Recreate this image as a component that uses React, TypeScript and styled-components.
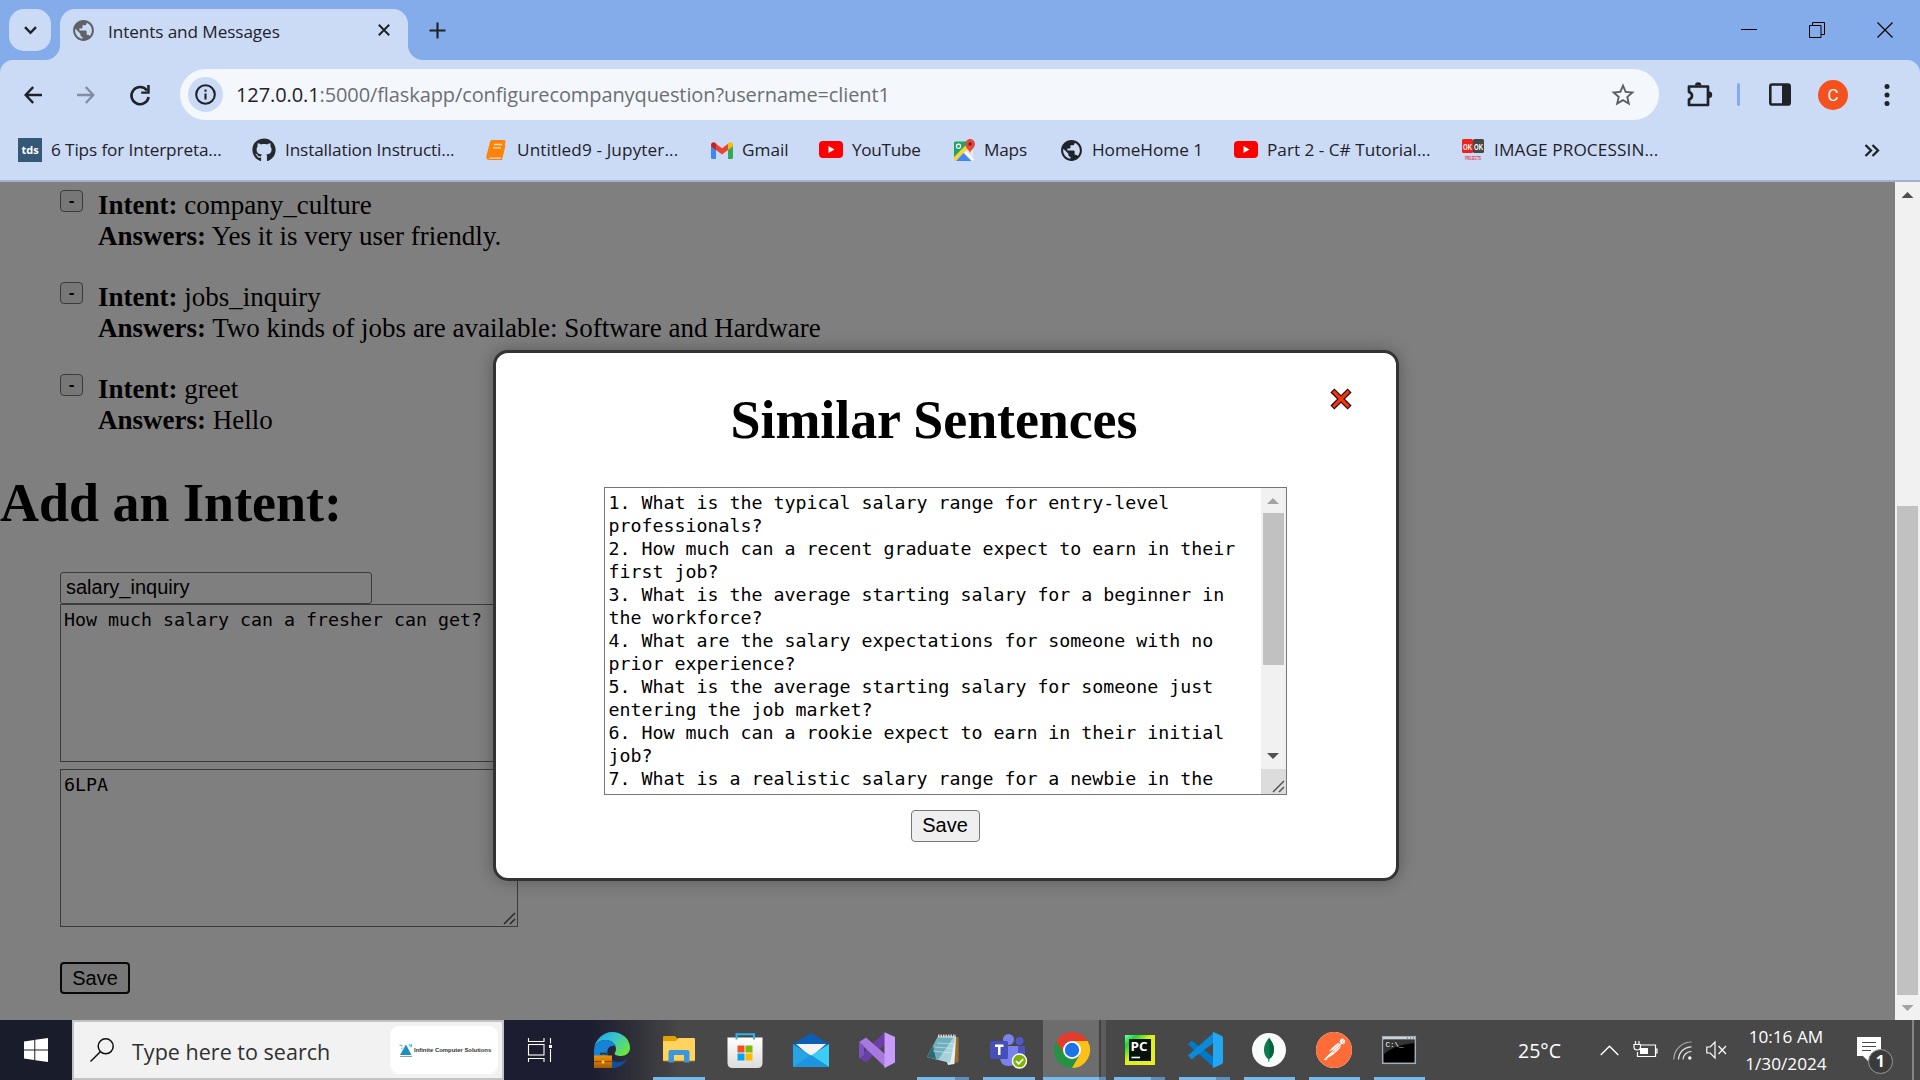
import React from 'react';
import styled, { createGlobalStyle } from 'styled-components';
import { MdPublic, MdStarOutline } from 'react-icons/md';
import { FaGithub } from 'react-icons/fa';
import { SiPostman } from 'react-icons/si';

const ui = '"Open Sans", "Noto Sans", sans-serif';
const serif = '"Liberation Serif", "Times New Roman", serif';
const arial = '"Liberation Sans", Arial, sans-serif';
const mono = '"DejaVu Sans Mono", Consolas, monospace';

const GlobalStyle = createGlobalStyle`
  *, *::before, *::after { box-sizing: border-box; }
  body { margin: 0; background: #808080; overflow: hidden; }
  svg { display: block; flex: none; overflow: visible; }
  button { margin: 0; padding: 0; }
`;

const Screen = styled.div`
  width: 1920px;
  height: 1080px;
  display: flex;
  flex-direction: column;
  overflow: hidden;
`;

/* ---------- browser chrome ---------- */

const TitleBar = styled.header`
  height: 60px;
  flex: none;
  display: flex;
  padding: 9px 0 0 9px;
  background: #84abea;
`;

const TabSearch = styled.button`
  width: 42px;
  height: 42px;
  display: flex;
  align-items: center;
  justify-content: center;
  border: 0;
  border-radius: 15px;
  background: #cbdbf6;
`;

const Tab = styled.div`
  position: relative;
  width: 348px;
  height: 51px;
  margin-left: 9px;
  padding: 0 18px 9px 11px;
  display: flex;
  align-items: center;
  border-radius: 15px 15px 0 0;
  background: #cbdbf6;
  &::before, &::after {
    content: '';
    position: absolute;
    bottom: 0;
    width: 15px;
    height: 15px;
  }
  &::before {
    left: -15px;
    background: radial-gradient(circle at 0 0, transparent 14.5px, #cbdbf6 15.5px);
  }
  &::after {
    right: -15px;
    background: radial-gradient(circle at 100% 0, transparent 14.5px, #cbdbf6 15.5px);
  }
`;

const Label = styled.span<{ $size?: number; $track?: number; $color?: string }>`
  font: ${p => p.$size ?? 17.2}px ${ui};
  letter-spacing: ${p => p.$track ?? 0}px;
  color: ${p => p.$color ?? '#1f2228'};
  white-space: pre;
`;

const TabTitle = styled(Label)`
  flex: 1;
  margin: 3px 0 0 12px;
`;

const NewTab = styled.div`
  margin: 13px 0 0 21px;
`;

const WindowControls = styled.div`
  margin-left: auto;
  padding: 13px 27px 0 0;
  display: flex;
  gap: 52px;
`;

const ToolbarWrap = styled.div`
  flex: none;
  background: #84abea;
`;

const Toolbar = styled.div`
  height: 69px;
  display: flex;
  align-items: center;
  padding-left: 24px;
  background: #cbdbf6;
  border-radius: 13px 13px 0 0;
`;

const NavGroup = styled.div`
  width: 156px;
  display: flex;
  align-items: center;
  gap: 35px;
  svg:nth-child(2) { opacity: 0.42; }
`;

const AddressBar = styled.div`
  width: 1479px;
  height: 51px;
  padding: 0 22px 0 8px;
  display: flex;
  align-items: center;
  border-radius: 26px;
  background: #f4f8fd;
  color: #5b5e63;
`;

const SiteInfo = styled.div`
  width: 35px;
  height: 35px;
  margin-right: 13px;
  display: flex;
  align-items: center;
  justify-content: center;
  border-radius: 50%;
  background: #cbdbf6;
`;

const Url = styled(Label)`
  flex: 1;
`;

const Actions = styled.div`
  flex: 1;
  display: flex;
  align-items: center;
  padding-left: 27px;
`;

const Separator = styled.i`
  width: 3px;
  height: 23px;
  margin: 0 29px 0 24px;
  border-radius: 2px;
  background: #84abea;
`;

const Avatar = styled.div`
  width: 30px;
  height: 30px;
  margin: 0 36px 0 27px;
  border-radius: 50%;
  background: #f4511e;
  color: #fff;
  font: 17px/30px Roboto, ${arial};
  text-align: center;
`;

const Bookmarks = styled.nav`
  height: 51px;
  flex: none;
  display: flex;
  align-items: center;
  padding: 0 40px 9px 18px;
  background: #cbdbf6;
`;

const Bookmark = styled.a<{ $w: number; $gap?: number }>`
  width: ${p => p.$w}px;
  flex: none;
  display: flex;
  align-items: center;
  gap: ${p => p.$gap ?? 9}px;
`;

const BookmarkLabel = styled(Label)`
  margin-top: -2px;
`;

const TdsIcon = styled.span`
  width: 24px;
  height: 24px;
  flex: none;
  background: #355876;
  color: #fff;
  font: bold 11px/23px ${ui};
  text-align: center;
`;

const OverflowButton = styled.div`
  margin-left: auto;
`;

const ChromeEdge = styled.div`
  height: 2px;
  flex: none;
  background: #a4b2cb;
`;

/* ---------- page ---------- */

const Viewport = styled.main`
  height: 838px;
  flex: none;
  display: flex;
`;

const Page = styled.section`
  position: relative;
  width: 1895px;
  height: 838px;
  overflow: hidden;
  background: #fff;
  font: 27px/31px ${serif};
  color: #000;
`;

const IntentList = styled.div`
  display: flex;
  flex-direction: column;
  gap: 30px;
  padding: 8px 0 0 60px;
`;

const IntentRow = styled.div`
  display: flex;
  align-items: flex-start;
  gap: 15px;
`;

const RemoveButton = styled.button`
  width: 23px;
  height: 22px;
  border: 1px solid #767676;
  border-radius: 4px;
  background: #efefef;
  color: #000;
  font: bold 17px/18px ${arial};
`;

const Heading = styled.h1`
  margin: 36px 0 0;
  font: bold 54px/62px ${serif};
`;

const Form = styled.form`
  display: flex;
  flex-direction: column;
  align-items: flex-start;
  padding: 38px 0 0 60px;
`;

const TextInput = styled.div`
  width: 312px;
  height: 32px;
  padding: 0 5px;
  border: 1px solid #767676;
  border-radius: 3px;
  font: 20px/29px ${arial};
`;

const TextArea = styled.div<{ $w: number; $h: number }>`
  position: relative;
  width: ${p => p.$w}px;
  height: ${p => p.$h}px;
  padding: 3px;
  border: 1px solid #767676;
  overflow: hidden;
  background: #fff;
  color: #000;
  font: 18.27px/23px ${mono};
  white-space: pre;
`;

const AnswerArea = styled(TextArea)`
  margin-top: 7px;
`;

const SentenceArea = styled(TextArea)`
  margin-right: 2px;
  padding-left: 4px;
`;

const Grip = styled.span`
  position: absolute;
  right: 1px;
  bottom: 1px;
`;

const Button = styled.button<{ $focused?: boolean }>`
  width: ${p => (p.$focused ? 70 : 69)}px;
  height: 32px;
  border: ${p => (p.$focused ? '2px solid #101010' : '1px solid #767676')};
  border-radius: 4px;
  background: #efefef;
  color: #000;
  font: 20px/26px ${arial};
`;

const FormButton = styled(Button)`
  margin-top: 35px;
`;

const Overlay = styled.div`
  position: absolute;
  inset: 0;
  background: rgba(0, 0, 0, 0.5);
`;

const Modal = styled.div`
  position: absolute;
  left: 493px;
  top: 168px;
  width: 906px;
  height: 531px;
  display: flex;
  flex-direction: column;
  align-items: center;
  border: 3px solid #333;
  border-radius: 15px;
  background: #fff;
  box-shadow: 0 0 17px rgba(0, 0, 0, 0.3);
`;

const ModalTitle = styled.h1`
  margin: 36px 24px 36px 0;
  font: bold 54px/62px ${serif};
  letter-spacing: -0.1px;
`;

const CloseIcon = styled.span`
  position: absolute;
  right: 44px;
  top: 35px;
`;

const AreaScroll = styled.div`
  position: absolute;
  top: 0;
  right: 0;
  width: 25px;
  height: 100%;
  padding-top: 10px;
  display: flex;
  flex-direction: column;
  align-items: center;
  background: #f1f1f1;
`;

const Arrow = styled.i<{ $up?: boolean; $faint?: boolean }>`
  width: 12px;
  height: 6px;
  flex: none;
  background: ${p => (p.$faint ? '#a3a3a3' : '#505050')};
  clip-path: ${p => (p.$up ? 'polygon(50% 0, 100% 100%, 0 100%)' : 'polygon(0 0, 100% 0, 50% 100%)')};
`;

const Thumb = styled.i<{ $h: number; $top: number; $bottom: number }>`
  width: 21px;
  height: ${p => p.$h}px;
  margin: ${p => p.$top}px 0 ${p => p.$bottom}px;
  flex: none;
  background: #c1c1c1;
`;

const GripCorner = styled.div`
  width: 25px;
  height: 25px;
  margin-top: auto;
  background: #dcdcdc;
`;

const ModalButton = styled(Button)`
  margin: 15px 2px 0 0;
  padding-bottom: 2px;
`;

const Scrollbar = styled.aside`
  width: 25px;
  display: flex;
  flex-direction: column;
  align-items: center;
  padding-top: 10px;
  background: #f1f1f1;
`;

/* ---------- taskbar ---------- */

const Taskbar = styled.footer`
  height: 60px;
  flex: none;
  display: flex;
  background: linear-gradient(90deg, #191c2b 0, #1c1d30 590px, #30303a 635px, #484848 680px);
`;

const Start = styled.div`
  width: 72px;
  display: flex;
  align-items: center;
  justify-content: center;
`;

const SearchBox = styled.div`
  width: 432px;
  height: 60px;
  display: flex;
  align-items: center;
  padding: 0 4px 0 16px;
  border: 2px solid #c3c3c3;
  background: #f2f2f2;
`;

const SearchText = styled(Label)`
  flex: 1;
  margin: 2px 0 0 18px;
`;

const Brand = styled.div`
  width: 108px;
  height: 48px;
  display: flex;
  align-items: center;
  gap: 1px;
  padding-left: 9px;
  border-radius: 9px;
  background: #fff;
  font: bold 5.9px ${arial};
  color: #333;
  white-space: nowrap;
`;

const AppRow = styled.div`
  display: flex;
`;

const AppSlot = styled.div<{ $w: number }>`
  width: ${p => p.$w}px;
  height: 60px;
  flex: none;
  display: grid;
  grid-template-rows: 57px 3px;
  justify-items: center;
  align-items: center;
  svg { margin-top: 3px; }
`;

const Underline = styled.i<{ $w: number; $dim?: number }>`
  width: ${p => p.$w + (p.$dim ?? 0)}px;
  height: 3px;
  background: linear-gradient(90deg, #76b9ed ${p => p.$w}px, #5f8fb8 ${p => p.$w}px);
`;

const ChromeSlot = styled(AppSlot)`
  background: linear-gradient(90deg, #6d6d6d 56px, #434343 56px, #434343 58px, #5c5c5c 58px);
  justify-items: start;
  svg { margin-left: 11px; }
`;

const Tray = styled.div`
  flex: 1;
  display: flex;
  align-items: center;
  padding-left: 86px;
`;

const Clock = styled.div`
  width: 84px;
  margin: 0 0 1px 17px;
  display: flex;
  flex-direction: column;
  align-items: center;
  gap: 4px;
`;

const TrayItem = styled.div<{ $ml: number }>`
  margin-left: ${p => p.$ml}px;
`;

const Notice = styled.div`
  position: relative;
  margin: 12px 0 0 29px;
  width: 36px;
  height: 38px;
`;

const NoticeCount = styled.span`
  position: absolute;
  left: 11px;
  top: 12px;
  width: 25px;
  height: 25px;
  border: 1px solid #999;
  border-radius: 50%;
  background: #3b3b3b;
  color: #fff;
  font: bold 16px/23px ${ui};
  text-align: center;
`;

const DesktopEdge = styled.i`
  width: 2px;
  height: 60px;
  margin: 0 6px 0 auto;
  background: #858585;
`;

/* ---------- drawings ---------- */

const Youtube = () => (
  <svg width="24" height="20" viewBox="0 0 24 20">
    <rect x="0" y="1" width="24" height="17" rx="4" fill="#f00" />
    <path d="M9.500 6v7l6-3.500z" fill="#fff" />
  </svg>
);

const Gmail = () => (
  <svg width="22" height="17" viewBox="0 0 22 17">
    <path d="M0 3v12.500q0 1.500 1.500 1.500H5V6.500z" fill="#4285f4" />
    <path d="M22 3v12.500q0 1.500-1.500 1.500H17V6.500z" fill="#34a853" />
    <path d="M17 1.500V8l5-3.800V3c0-2.600-2.500-3.500-4.200-2.200z" fill="#fbbc04" />
    <path d="M5 8V1.800l6 4.500 6-4.500V8l-6 4.500z" fill="#ea4335" />
    <path d="M0 3v1.200L5 8V1.500L4.200.8C2.500-.5 0 .4 0 3z" fill="#c5221f" />
  </svg>
);

const Maps = () => (
  <svg width="23" height="23" viewBox="0 0 23 23">
    <rect x="1" y="3" width="19" height="19" rx="1.500" fill="#e8eaed" />
    <path d="M1 4q0-1.500 1.500-1.500H18L1 20z" fill="#1fa463" />
    <path d="M1 18L15 4l3 3L2.500 22H1z" fill="#fcd33c" />
    <path d="M3 22l7.500-8 8 8z" fill="#4285f4" />
    <path d="M12 12.500l8.500 8.500" stroke="#fff" strokeWidth="1.500" />
    <circle cx="5.500" cy="7.300" r="2.100" fill="none" stroke="#fff" strokeWidth="1.200" />
    <path d="M17 15c0-4-4.800-5.600-4.800-10A4.900 4.900 0 0 1 22 5c0 4.400-5 6-5 10z" fill="#dd4b3e" />
    <circle cx="17.100" cy="5" r="1.700" fill="#7c1c16" />
  </svg>
);

const Notebook = () => (
  <svg width="20" height="22" viewBox="0 0 20 22">
    <path d="M6 1h12q2 0 1.500 2L16 17q-.4 1.500-2 1.500H3.500q-1 .8 0 1.300H15L18.500 6l1 .5L16 21H3Q-.3 20.500.4 17L4 3q.5-2 2-2z" fill="#ff8208" />
    <path d="M8 5.500h8M7 8.800h8" stroke="#ffe2bd" strokeWidth="1.300" />
  </svg>
);

const OkProjects = () => (
  <svg width="22" height="22" viewBox="0 0 22 22">
    <rect x="0" y="0" width="11" height="14" rx="1.500" fill="#f0231c" />
    <rect x="11" y="0" width="11" height="14" rx="1.500" fill="#474747" />
    <g fontFamily="Liberation Sans" fontWeight="bold" textAnchor="middle">
      <text x="5.500" y="10.500" fontSize="9.500" fill="#fff" textLength="9" lengthAdjust="spacingAndGlyphs">OK</text>
      <text x="16.500" y="10.500" fontSize="9.500" fill="#fff" textLength="9" lengthAdjust="spacingAndGlyphs">OK</text>
      <text x="11" y="20.500" fontSize="6" fill="#e4404a" textLength="16" lengthAdjust="spacingAndGlyphs">PROJECTS</text>
    </g>
  </svg>
);

const BackArrow = () => (
  <svg width="18" height="18" viewBox="0 0 18 18" fill="none" stroke="#1f2228" strokeWidth="2.500">
    <path d="M9.200 1L1.700 9l7.500 8M2 9h16" />
  </svg>
);

const ForwardArrow = () => (
  <svg width="18" height="18" viewBox="0 0 18 18" fill="none" stroke="#1f2228" strokeWidth="2.300">
    <path d="M8.800 1l7.500 8-7.500 8M16 9H0" />
  </svg>
);

const Puzzle = () => (
  <svg width="27" height="27" viewBox="0 0 27 27">
    <path d="M3 5.500h19v18.500H3v-5.500c4-1.500 4-6 0-7.500z" fill="none" stroke="#1f2228" strokeWidth="2.700" strokeLinejoin="round" />
    <path d="M9 4.500a3.200 3.200 0 0 1 6.400 0zM23 10.600a3.200 3.200 0 0 1 0 6.400z" fill="#1f2228" />
  </svg>
);

const SidePanel = () => (
  <svg width="22" height="23" viewBox="0 0 22 23">
    <rect x="1.300" y="1.500" width="19.400" height="20" rx="1.800" fill="none" stroke="#1f2228" strokeWidth="2.600" />
    <path d="M13 1h8v21h-8z" fill="#1f2228" />
  </svg>
);

const GripLines = () => (
  <svg width="13" height="13" viewBox="0 0 13 13">
    <path d="M1 12L12 1M7 12l5-5" stroke="#4a4a4a" strokeWidth="1.400" fill="none" />
  </svg>
);

const CloseX = () => (
  <svg width="22" height="22" viewBox="0 0 22 22">
    <path d="M2.400 2.400l17.200 17.200M19.600 2.400L2.400 19.600" stroke="#1a0a05" strokeWidth="5.600" />
    <path d="M3.200 3.200l15.600 15.600M18.800 3.200L3.200 18.800" stroke="#f4330f" strokeWidth="3.300" />
  </svg>
);

const Edge = () => (
  <svg width="36" height="36" viewBox="0 0 36 36">
    <defs>
      <linearGradient id="edgeTop" x1="0" y1="0" x2="1" y2="0.700">
        <stop offset="0" stopColor="#1e9fe0" />
        <stop offset="0.450" stopColor="#35c1d6" />
        <stop offset="1" stopColor="#6ae63f" />
      </linearGradient>
      <linearGradient id="edgeCase" x1="0" y1="0" x2="0" y2="1">
        <stop offset="0" stopColor="#ef9408" />
        <stop offset="1" stopColor="#a85a05" />
      </linearGradient>
    </defs>
    <path d="M14 17c-2 9 6 14 12 13 4-.6 6-2 7.500-4-2 6-8.500 10-15.500 10-6 0-10-4-10-9 0-4 2-8 6-10z" fill="#0f4f9e" />
    <path d="M0 17C1 8 9 0 18 0c10 0 18 7 18 15.500C36 21 32 24 27 24c-4 0-6.500-1-6.300-2.500.3-1.500 1.300-2 1.300-4.500 0-5-4.500-9-10-9C6 8 1.500 11 0 17z" fill="url(#edgeTop)" />
    <path d="M0 18C1 11 6 8 11.500 8c5 0 8.500 2.500 9.500 6-4-1-8 2-8 6.500 0 2 .5 3 1 5L0 27z" fill="#1583d8" />
    <path d="M7 23v-1.500h5V23" stroke="#4b2b08" strokeWidth="1.500" fill="none" />
    <rect x="0" y="23.500" width="18" height="12.500" fill="url(#edgeCase)" />
    <path d="M0 29.500h18" stroke="#8c4a05" />
    <rect x="7.800" y="28.500" width="2.500" height="3" fill="#ffd23e" />
  </svg>
);

const Explorer = () => (
  <svg width="32" height="28" viewBox="0 0 32 28">
    <path d="M0 1q0-1 1-1h11l3 3v4H0z" fill="#e0a100" />
    <path d="M0 5h13l2.500-3H31q1 0 1 1v21q0 1-1 1H0z" fill="#ffd35d" />
    <path d="M0 24h32v.5q0 .8-1 .8H1q-1 0-1-.8z" fill="#eab73a" />
    <path d="M5.500 26V16q0-2 2-2h17q2 0 2 2v10q0 .5-.5.500h-5V19H11v7.500H6q-.5 0-.5-.5z" fill="#3b96dd" />
  </svg>
);

const Store = () => (
  <svg width="36" height="36" viewBox="0 0 36 36">
    <defs>
      <linearGradient id="bag" x1="0" y1="0" x2="0" y2="1">
        <stop offset="0" stopColor="#fff" />
        <stop offset="1" stopColor="#dcdcdc" />
      </linearGradient>
    </defs>
    <path d="M.5 5.500h35V31q0 5-5 5h-25q-5 0-5-5z" fill="url(#bag)" />
    <path d="M9.500 7.500V2.200h17.500v5.300" stroke="#2bb4ee" strokeWidth="2" fill="none" />
    <path d="M10.500 13.500h7v7h-7z" fill="#f25022" />
    <path d="M18.500 13.500h7v7h-7z" fill="#7fba00" />
    <path d="M10.500 21.500h7v7h-7z" fill="#00a4ef" />
    <path d="M18.500 21.500h7v7h-7z" fill="#ffb900" />
  </svg>
);

const Mail = () => (
  <svg width="36" height="34" viewBox="0 0 36 34">
    <path d="M0 11L18 0l18 11v4H0z" fill="#0a5fb4" />
    <path d="M3 11h30L18 24z" fill="#f3f3f3" />
    <path d="M0 11l18 11.500L36 34H0z" fill="#27a3e6" />
    <path d="M36 11L18 22.500 36 34z" fill="#3ccdf6" />
    <path d="M0 34h36L18 22z" fill="#1d94df" />
  </svg>
);

const VisualStudio = () => (
  <svg width="36" height="36" viewBox="0 0 36 36">
    <path d="M0 26V25L25.500.300v12L7 30.500z" fill="#6b3fa6" />
    <path d="M0 10l7-4.500L27 23v13z" fill="#a778df" />
    <path d="M0 10l5 4v9l-5 3z" fill="#7d52bd" />
    <path d="M25.500.200L36 5v25.500L25.500 36z" fill="#c99bff" />
  </svg>
);

const Notepad = () => (
  <svg width="34" height="32" viewBox="0 0 34 32">
    <path d="M29 3h3.500v25L29 29z" fill="#9b6c2d" />
    <path d="M12 2.500h18L28.500 30 22 31z" fill="#e9eef0" />
    <path d="M12 2.500h17.500L24 29 1 23z" fill="#a8d2da" />
    <path d="M12 3L1 23l11 3L27 4z" fill="#6faebb" />
    <path d="M7 12L1 23l9 2.300z" fill="#2e6875" />
    <path d="M12 2h18" stroke="#d7d7d7" strokeWidth="3" strokeDasharray="1.500 1" />
    <path d="M11 9l17 1M9 13l18 1.500M7 17l19 2" stroke="#d6edf1" strokeWidth=".6" />
  </svg>
);

const Teams = () => (
  <svg width="38" height="36" viewBox="0 0 38 36">
    <circle cx="29.500" cy="9" r="4" fill="#5059c9" />
    <path d="M25 14h10v9q0 5-6 5h-4z" fill="#4b53bc" />
    <circle cx="18.500" cy="7.500" r="5.500" fill="#7b83eb" />
    <path d="M10 14h18v11q0 9-9 9t-9-9z" fill="#7b83eb" />
    <rect x="0" y="9" width="18" height="18" rx="1.500" fill="#464eb8" />
    <path d="M5 13.800h8.500M9.250 14v9" stroke="#fff" strokeWidth="2.500" />
    <circle cx="29.500" cy="29" r="7" fill="#7cb305" stroke="#fff" strokeWidth="1.400" />
    <path d="M26 29l2.700 2.700 4.500-4.700" stroke="#fff" strokeWidth="1.700" fill="none" />
  </svg>
);

const Chrome = () => (
  <svg width="36" height="36" viewBox="0 0 36 36">
    <path d="M18 18L2.410 9A18 18 0 0 0 18 36l7.800-13.500z" fill="#229342" />
    <path d="M18 18V9h15.600A18 18 0 0 1 18 36l7.800-13.500z" fill="#fbc116" />
    <path d="M2.410 9A18 18 0 0 1 33.590 9H18a9 9 0 0 0-7.800 13.500z" fill="#e33b2e" />
    <circle cx="18" cy="18" r="9" fill="#fff" />
    <circle cx="18" cy="18" r="7.200" fill="#1a73e8" />
  </svg>
);

const PyCharm = () => (
  <svg width="30" height="30" viewBox="0 0 30 30">
    <defs>
      <linearGradient id="pc" x1="0" y1="0" x2="1" y2="1">
        <stop offset="0" stopColor="#6dffb0" />
        <stop offset="0.200" stopColor="#21d436" />
        <stop offset="0.450" stopColor="#d9f01c" />
        <stop offset="1" stopColor="#f2ee1c" />
      </linearGradient>
    </defs>
    <rect width="30" height="30" fill="url(#pc)" />
    <rect x="4" y="4" width="22" height="22" fill="#07120a" />
    <text x="5.500" y="15.500" fontFamily="Open Sans" fontWeight="bold" fontSize="12" fill="#fff" textLength="17" lengthAdjust="spacingAndGlyphs">PC</text>
    <path d="M6.500 22.500h8.500" stroke="#fff" strokeWidth="1.600" />
  </svg>
);

const VsCode = () => (
  <svg width="36" height="36" viewBox="0 0 36 36">
    <path d="M1 12.500l2.500-3q.8-.8 2-.2L27 25.500V35.500z" fill="#0079c6" />
    <path d="M1 23.500l2.500 3q.8.800 2 .2L27 10.500V.500z" fill="#0a8ad8" />
    <path d="M25.500.300Q26 0 27 .300l7.500 3.500Q36 4.500 36 6v24q0 1.500-1.500 2.200L27 35.700q-1 .3-1.500 0 .5-.5.500-1.700V2q0-1.200-.5-1.700z" fill="#24a7f2" />
  </svg>
);

const Mongo = () => (
  <svg width="34" height="34" viewBox="0 0 34 34">
    <circle cx="17" cy="17" r="17" fill="#f9fbfa" />
    <path d="M17 4.500c1 2.500 5 5.500 5 12 0 5-2.500 8-4.500 9.500L17.200 29h-.7l-.3-3c-2-1.500-4.200-4.500-4.200-9.300 0-6.500 4-9.700 5-12.200z" fill="#0c7d50" />
    <path d="M17 4.500c1 2.500 5 5.500 5 12 0 5-2.500 8-4.500 9.500z" fill="#046343" />
  </svg>
);

const PostmanDisc = styled.div`
  width: 36px;
  height: 36px;
  margin-top: 3px;
  border-radius: 50%;
  background: #fff;
  color: #ff6c37;
  svg { margin: 0; }
`;

const Terminal = () => (
  <svg width="34" height="28" viewBox="0 0 34 28">
    <rect x=".7" y=".7" width="32.600" height="26.600" fill="#000" stroke="#a4adb4" strokeWidth="1.500" />
    <path d="M1 1h32v2.500H1z" fill="#c9d3da" />
    <path d="M2 4h30v3Q12 9 2 18z" fill="#343434" />
    <path d="M25 2h1M28 2h1M31 2h1" stroke="#4c5962" />
    <text x="3.500" y="10.500" fontFamily="Liberation Mono" fontSize="7.500" fill="#fff" textLength="18" lengthAdjust="spacingAndGlyphs">C:\_</text>
  </svg>
);

const TaskView = () => (
  <svg width="24" height="24" viewBox="0 0 24 24" fill="none" stroke="#fff" strokeWidth="1.100">
    <path d="M.5 0v3.500h15.500V0M.5 24v-3.500h15.500V24" />
    <rect x=".5" y="6.500" width="15.500" height="10.500" />
    <path d="M22.500 0v5.500M22.500 11v13" />
    <path d="M21 7h3v3h-3z" fill="#fff" stroke="none" />
  </svg>
);

const InfiniteLogo = () => (
  <svg width="14" height="15" viewBox="0 0 14 15">
    <path d="M7 1.500L12.500 12H1z" fill="#1c8fc6" />
    <path d="M.5 2l3 1M2 5l1.500.5M10 1l2 3M12.500 1v3" stroke="#47c9c0" strokeWidth="1.200" />
    <path d="M1 13.500h12" stroke="#9a9a9a" strokeWidth="1" />
  </svg>
);

const BatteryIcon = () => (
  <svg width="25" height="18" viewBox="0 0 25 18" fill="none" stroke="#fff" strokeWidth="1.200">
    <path d="M8 4h14.500v11.500H4.500V11M22.500 8h1.500v4h-1.500" />
    <path d="M7 7h8v6H7z" fill="#fff" stroke="none" />
    <path d="M2.500 0v3M6 0v3M1 3.500h6.500V6q0 3-3.200 3T1 6z" fill="#484848" />
  </svg>
);

const WifiIcon = () => (
  <svg width="19" height="19" viewBox="0 0 19 19" fill="none" strokeWidth="1.200">
    <path d="M.8 18.500A17.500 17.500 0 0 1 18.500 1" stroke="#a9a9a9" />
    <path d="M5.500 18.500A13 13 0 0 1 18.500 5.800" stroke="#e9e9e9" />
    <path d="M10 18.500a8.500 8.500 0 0 1 8.500-8" stroke="#e9e9e9" />
    <circle cx="16.800" cy="17" r="1.700" fill="#fff" />
  </svg>
);

const VolumeIcon = () => (
  <svg width="21" height="18" viewBox="0 0 21 18" fill="none" stroke="#fff" strokeWidth="1.200">
    <path d="M.8 6h3.400L9 1v16l-4.800-5H.8z" />
    <path d="M12.500 5l7.500 8M20 5l-7.500 8" />
  </svg>
);

const intents = [
  { name: 'company_culture', answer: 'Yes it is very user friendly.' },
  { name: 'jobs_inquiry', answer: 'Two kinds of jobs are available: Software and Hardware' },
  { name: 'greet', answer: 'Hello' },
];

const bookmarks = [
  { label: '6 Tips for Interpreta...', w: 234, track: -0.12, icon: <TdsIcon>tds</TdsIcon> },
  { label: 'Installation Instructi...', w: 234, track: -0.13, icon: <FaGithub size={24} color="#24292f" /> },
  { label: 'Untitled9 - Jupyter...', w: 225, track: 0.1, gap: 11, icon: <Notebook /> },
  { label: 'Gmail', w: 108, track: 0, icon: <Gmail /> },
  { label: 'YouTube', w: 134, track: -0.3, icon: <Youtube /> },
  { label: 'Maps', w: 106, track: -0.2, gap: 8, icon: <Maps /> },
  { label: 'HomeHome 1', w: 175, track: -0.05, gap: 8, icon: <MdPublic size={25} color="#1f2228" /> },
  { label: 'Part 2 - C# Tutorial...', w: 228, track: 0, gap: 9, icon: <Youtube /> },
  { label: 'IMAGE PROCESSIN...', w: 200, track: 0.1, gap: 10, icon: <OkProjects /> },
];

const sentences = `1. What is the typical salary range for entry-level
professionals?
2. How much can a recent graduate expect to earn in their
first job?
3. What is the average starting salary for a beginner in
the workforce?
4. What are the salary expectations for someone with no
prior experience?
5. What is the average starting salary for someone just
entering the job market?
6. How much can a rookie expect to earn in their initial
job?
7. What is a realistic salary range for a newbie in the`;

const apps = [
  { w: 72, icon: <TaskView /> },
  { w: 72, icon: <Edge /> },
  { w: 62, line: 52, icon: <Explorer /> },
  { w: 69, icon: <Store /> },
  { w: 64, icon: <Mail /> },
  { w: 68, icon: <VisualStudio /> },
  { w: 64, line: 38, dim: 14, icon: <Notepad /> },
  { w: 68, line: 52, icon: <Teams /> },
];

const appsAfter = [
  { w: 67, line: 37, dim: 14, icon: <PyCharm /> },
  { w: 63, line: 37, dim: 14, icon: <VsCode /> },
  { w: 66, line: 51, icon: <Mongo /> },
  { w: 64, line: 51, icon: <PostmanDisc><SiPostman size={36} /></PostmanDisc> },
  { w: 66, line: 51, icon: <Terminal /> },
];

const BrowserChrome = () => (
  <>
    <TitleBar>
      <TabSearch>
        <svg width="13" height="9" viewBox="0 0 13 9"><path d="M1 1.200l5.500 5.600L12 1.200" stroke="#1f2228" strokeWidth="2.400" fill="none" /></svg>
      </TabSearch>
      <Tab>
        <MdPublic size={25} color="#5f6368" />
        <TabTitle $track={-0.1}>Intents and Messages</TabTitle>
        <svg width="12" height="12" viewBox="0 0 12 12"><path d="M.8.800l10.400 10.400M11.200.800L.8 11.200" stroke="#1f2228" strokeWidth="2" /></svg>
      </Tab>
      <NewTab>
        <svg width="17" height="17" viewBox="0 0 17 17"><path d="M8.500.500v16M.5 8.500h16" stroke="#1f2228" strokeWidth="2.100" /></svg>
      </NewTab>
      <WindowControls>
        <svg width="16" height="16" viewBox="0 0 16 16"><path d="M0 7.500h16" stroke="#000" /></svg>
        <svg width="16" height="16" viewBox="0 0 16 16" fill="none" stroke="#000"><path d="M.5 3.500h11.500v12H.5zM3.500 3.500V.500H15.500v12H12" /></svg>
        <svg width="16" height="16" viewBox="0 0 16 16"><path d="M.5.500l15 15M15.500.500l-15 15" stroke="#000" strokeWidth="1.200" /></svg>
      </WindowControls>
    </TitleBar>
    <ToolbarWrap>
      <Toolbar>
        <NavGroup>
          <BackArrow />
          <ForwardArrow />
          <svg width="20" height="22" viewBox="0 0 20 22">
            <path d="M17 6.500A8.600 8.600 0 1 0 18.600 13" stroke="#1f2228" strokeWidth="2.600" fill="none" />
            <path d="M19.700 1v8.800h-8.500V7.400h6V1z" fill="#1f2228" />
          </svg>
        </NavGroup>
        <AddressBar>
          <SiteInfo>
            <svg width="21" height="21" viewBox="0 0 21 21" fill="none" stroke="#1f2228" strokeWidth="2.100"><circle cx="10.500" cy="10.500" r="9.300" /><path d="M10.500 9.500v6M10.500 5.500v2.200" /></svg>
          </SiteInfo>
          <Url $size={20} $track={-0.1} $color="#6c6f74"><Label $size={20} $track={-0.1}>127.0.0.1</Label>:5000/flaskapp/configurecompanyquestion?username=client1</Url>
          <MdStarOutline size={28} />
        </AddressBar>
        <Actions>
          <Puzzle />
          <Separator />
          <SidePanel />
          <Avatar>C</Avatar>
          <svg width="6" height="24" viewBox="0 0 6 24" fill="#1f2228"><circle cx="3" cy="3.500" r="2.500" /><circle cx="3" cy="12" r="2.500" /><circle cx="3" cy="20.500" r="2.500" /></svg>
        </Actions>
      </Toolbar>
    </ToolbarWrap>
    <Bookmarks>
      {bookmarks.map(b => (
        <Bookmark key={b.label} $w={b.w} $gap={b.gap}>
          {b.icon}
          <BookmarkLabel $track={b.track}>{b.label}</BookmarkLabel>
        </Bookmark>
      ))}
      <OverflowButton>
        <svg width="16" height="13" viewBox="0 0 16 13"><path d="M1.500 1l5.500 5.500L1.500 12M8.500 1l5.500 5.500L8.500 12" stroke="#1f2228" strokeWidth="2.300" fill="none" /></svg>
      </OverflowButton>
    </Bookmarks>
    <ChromeEdge />
  </>
);

const SimilarSentences = () => (
  <Modal>
    <CloseIcon><CloseX /></CloseIcon>
    <ModalTitle>Similar Sentences</ModalTitle>
    <SentenceArea $w={683} $h={308}>
      {sentences}
      <AreaScroll>
        <Arrow $up $faint />
        <Thumb $h={152} $top={9} $bottom={88} />
        <Arrow />
        <GripCorner><Grip><GripLines /></Grip></GripCorner>
      </AreaScroll>
    </SentenceArea>
    <ModalButton>Save</ModalButton>
  </Modal>
);

export default function App() {
  return (
    <Screen>
      <GlobalStyle />
      <BrowserChrome />
      <Viewport>
        <Page>
          <IntentList>
            {intents.map(i => (
              <IntentRow key={i.name}>
                <RemoveButton>-</RemoveButton>
                <div>
                  <div><b>Intent:</b> {i.name}</div>
                  <div><b>Answers:</b> {i.answer}</div>
                </div>
              </IntentRow>
            ))}
          </IntentList>
          <Heading>Add an Intent:</Heading>
          <Form>
            <TextInput>salary_inquiry</TextInput>
            <TextArea $w={458} $h={158}>How much salary can a fresher can get?</TextArea>
            <AnswerArea $w={458} $h={158}>6LPA<Grip><GripLines /></Grip></AnswerArea>
            <FormButton type="button" $focused>Save</FormButton>
          </Form>
          <Overlay />
          <SimilarSentences />
        </Page>
        <Scrollbar>
          <Arrow $up />
          <Thumb $h={489} $top={308} $bottom={10} />
          <Arrow $faint />
        </Scrollbar>
      </Viewport>
      <Taskbar>
        <Start>
          <svg width="24" height="24" viewBox="0 0 24 24" fill="#fff"><path d="M0 3.500L10.300 2v9.500H0zM11.300 1.800L24 0v11.500H11.300zM0 12.500h10.300V22L0 20.500zM11.300 12.500H24V24l-12.700-1.800z" /></svg>
        </Start>
        <SearchBox>
          <svg width="24" height="24" viewBox="0 0 24 24" fill="none" stroke="#111" strokeWidth="1.500"><circle cx="15.700" cy="8.300" r="7.500" /><path d="M10.300 13.700L.5 23.500" /></svg>
          <SearchText $size={21.5} $track={0.02} $color="#303030">Type here to search</SearchText>
          <Brand><InfiniteLogo />Infinite Computer Solutions</Brand>
        </SearchBox>
        <AppRow>
          {apps.map((a, n) => (
            <AppSlot key={n} $w={a.w}>{a.icon}{a.line && <Underline $w={a.line} $dim={a.dim} />}</AppSlot>
          ))}
          <ChromeSlot $w={63}><Chrome /><Underline $w={56} $dim={7} /></ChromeSlot>
          {appsAfter.map((a, n) => (
            <AppSlot key={n} $w={a.w}>{a.icon}<Underline $w={a.line} $dim={a.dim} /></AppSlot>
          ))}
        </AppRow>
        <Tray>
          <Label $size={19.5} $color="#fff">25°C</Label>
          <TrayItem $ml={39}><svg width="19" height="11" viewBox="0 0 19 11"><path d="M.7 10L9.500 1.200 18.300 10" stroke="#fff" strokeWidth="1.400" fill="none" /></svg></TrayItem>
          <TrayItem $ml={14}><BatteryIcon /></TrayItem>
          <TrayItem $ml={15}><WifiIcon /></TrayItem>
          <TrayItem $ml={14}><VolumeIcon /></TrayItem>
          <Clock>
            <Label $color="#fff">10:16 AM</Label>
            <Label $color="#fff">1/30/2024</Label>
          </Clock>
          <Notice>
            <svg width="24" height="26" viewBox="0 0 24 26"><path d="M0 0h24v19H12v6l-6-6H0z" fill="#fff" /><path d="M5 5.500h14M5 9.500h14M5 13.500h9" stroke="#484848" strokeWidth="1.200" /></svg>
            <NoticeCount>1</NoticeCount>
          </Notice>
          <DesktopEdge />
        </Tray>
      </Taskbar>
    </Screen>
  );
}
